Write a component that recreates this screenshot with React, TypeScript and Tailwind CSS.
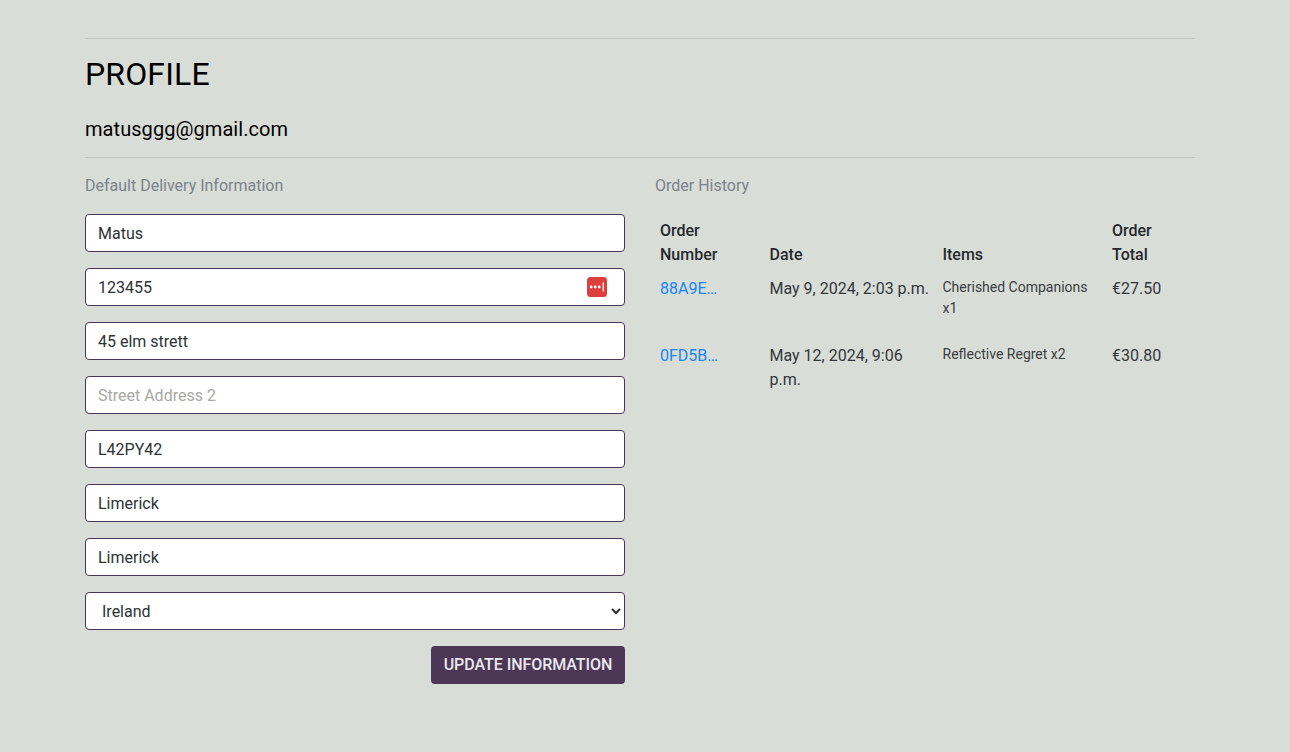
const inputClass =
  "block h-[38px] w-full rounded border border-[#4a3557] bg-white px-3 text-base text-[#2e3236] outline-none placeholder:text-[#a8a8a3]";

const orders = [
  {
    number: "88A9E…",
    date: "May 9, 2024, 2:03 p.m.",
    items: "Cherished Companions x1",
    total: "€27.50",
  },
  {
    number: "0FD5B…",
    date: "May 12, 2024, 9:06 p.m.",
    items: "Reflective Regret x2",
    total: "€30.80",
  },
];

function PasswordManagerIcon() {
  return (
    <svg
      viewBox="0 0 20 20"
      className="absolute right-[18px] top-[9px] h-5 w-5"
      aria-hidden="true"
    >
      <rect width="20" height="20" rx="3.5" fill="#dc3f3c" />
      <circle cx="4.2" cy="10" r="1.4" fill="#fff" />
      <circle cx="8.2" cy="10" r="1.4" fill="#fff" />
      <circle cx="12.2" cy="10" r="1.4" fill="#fff" />
      <rect x="15.6" y="5.5" width="1.3" height="9" fill="#fff" />
    </svg>
  );
}

export default function App() {
  return (
    <div className="min-h-[752px] bg-[#d9ddd8] pl-[85px] pr-[95px] pt-[38px] font-['Roboto',sans-serif] text-base leading-6 text-[#33373b]">
      <hr className="border-t border-black/10" />
      <h2 className="mt-4 mb-6 text-[32px] leading-[38.4px] font-normal tracking-[0.15px] text-black">
        PROFILE
      </h2>
      <h5 className="mb-4 text-xl leading-6 font-normal tracking-[0.06px] text-black">
        matusggg@gmail.com
      </h5>
      <hr className="border-t border-black/10" />

      <div className="mt-4 grid grid-cols-2 gap-[30px]">
        <section>
          <p className="mb-4 text-[#7a838a]">Default Delivery Information</p>
          <form className="flex flex-col gap-4">
            <input className={inputClass} defaultValue="Matus" placeholder="Full Name" />
            <div className="relative">
              <input className={inputClass} defaultValue="123455" placeholder="Phone Number" />
              <PasswordManagerIcon />
            </div>
            <input className={inputClass} defaultValue="45 elm strett" placeholder="Street Address 1" />
            <input className={inputClass} placeholder="Street Address 2" />
            <input className={inputClass} defaultValue="L42PY42" placeholder="Postcode" />
            <input className={inputClass} defaultValue="Limerick" placeholder="Town or City" />
            <input className={inputClass} defaultValue="Limerick" placeholder="County" />
            <select className={`${inputClass} pr-[14px]`} defaultValue="IE">
              <option value="IE">Ireland</option>
            </select>
            <div className="flex justify-end">
              <button
                type="button"
                className="h-[38px] w-[194px] rounded bg-[#4d3757] text-base font-medium tracking-[-0.05px] text-[#ece9ee]"
              >
                UPDATE INFORMATION
              </button>
            </div>
          </form>
        </section>

        <section>
          <p className="mb-4 text-[#7a838a]">Order History</p>
          <table className="w-full table-fixed border-collapse text-left">
            <colgroup>
              <col className="w-[109.5px]" />
              <col className="w-[173px]" />
              <col className="w-[169.5px]" />
              <col />
            </colgroup>
            <thead>
              <tr className="align-bottom text-[#25292d]">
                <th className="p-[5px] font-medium">Order Number</th>
                <th className="p-[5px] font-medium">Date</th>
                <th className="p-[5px] font-medium">Items</th>
                <th className="p-[5px] font-medium">Order Total</th>
              </tr>
            </thead>
            <tbody>
              {orders.map((order) => (
                <tr key={order.number} className="align-top">
                  <td className="p-[5px]">
                    <a href="#" className="text-[#1a85f5]">
                      {order.number}
                    </a>
                  </td>
                  <td className="p-[5px]">{order.date}</td>
                  <td className="p-[5px]">
                    <p className="mb-[15px] text-sm leading-[21px] text-[#3a3e42]">{order.items}</p>
                  </td>
                  <td className="p-[5px]">{order.total}</td>
                </tr>
              ))}
            </tbody>
          </table>
        </section>
      </div>
    </div>
  );
}
